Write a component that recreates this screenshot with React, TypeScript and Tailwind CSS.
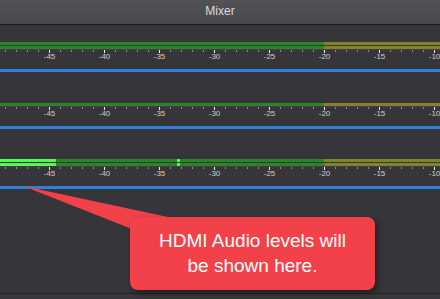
import React from 'react';

const W = 440;

// dB -> x on the meter: -45 sits at 49px, 11px per dB
const dbToX = (db: number) => 49 + (db + 45) * 11;

function Scale() {
  const minor: number[] = [];
  for (let db = -49; db <= -10; db++) minor.push(db);
  const majors = [-45, -40, -35, -30, -25, -20, -15, -10];
  return (
    <svg width={W} height={11} className="block">
      <line x1={0} x2={W} y1={0.5} y2={0.5} stroke="#4a3c40" />
      {minor.map((db) =>
        db % 5 === 0 ? null : (
          <rect key={db} x={dbToX(db)} y={1} width={1} height={2} fill="#8f8f8f" />
        )
      )}
      {majors.map((db) => (
        <g key={db}>
          <rect x={dbToX(db)} y={1} width={1} height={3} fill="#f4f4f4" />
          <text
            x={dbToX(db) + 0.5}
            y={10}
            textAnchor="middle"
            fontSize={8}
            fill="#cfcfcf"
            fontFamily="Liberation Sans, Arial, sans-serif"
          >
            {db}
          </text>
        </g>
      ))}
    </svg>
  );
}

function Channel({ level = 0, peak }: { level?: number; peak?: number }) {
  const split = dbToX(-20);
  return (
    <div className="relative flex h-[3px]">
      <div className="h-full bg-[#2c832c]" style={{ width: split }} />
      <div className="h-full flex-1 bg-[#82822e]" />
      {level > 0 && <div className="absolute left-0 top-0 h-full bg-[#58f458]" style={{ width: level }} />}
      {peak !== undefined && <div className="absolute top-0 h-full w-[3px] bg-[#58f458]" style={{ left: peak }} />}
    </div>
  );
}

function Meter({ stereo = true, level, peak }: { stereo?: boolean; level?: number; peak?: number }) {
  return (
    <div className="flex flex-col">
      {stereo ? (
        <div className="flex flex-col gap-px bg-[#1e4a20]">
          <Channel level={level} peak={peak} />
          <Channel level={level} peak={peak} />
        </div>
      ) : (
        <Channel />
      )}
      <Scale />
    </div>
  );
}

function BlueLine() {
  return <div className="h-[3px] w-full bg-[#2f80d8]" />;
}

export default function App() {
  return (
    <div
      className="relative flex h-[299px] w-[440px] flex-col overflow-hidden bg-[#363539]"
      style={{ fontFamily: 'Liberation Sans, Arial, sans-serif' }}
    >
      <div className="flex h-[25px] items-center justify-center border-b border-[#1d1d1f] bg-gradient-to-b from-[#535257] to-[#48474c] pb-[3px] text-[12px] text-[#dcdcdc]">
        Mixer
      </div>

      <div className="flex flex-1 flex-col">
        <div className="mt-[17px]">
          <Meter />
        </div>
        <div className="mt-[9px]">
          <BlueLine />
        </div>

        <div className="mt-[31px]">
          <Meter stereo={false} />
        </div>
        <div className="mt-[9px]">
          <BlueLine />
        </div>

        <div className="mt-[30px]">
          <Meter level={56} peak={177} />
        </div>
        <div className="mt-[9px]">
          <BlueLine />
        </div>

        <div className="mt-auto h-[6px] border-t border-[#242426] bg-[#38373b]" />
      </div>

      <svg width={W} height={299} className="pointer-events-none absolute left-0 top-0">
        <polygon points="23,186 168,217 132,229" fill="#f3414a" />
      </svg>
      <div className="absolute left-[130px] top-[217px] flex h-[73px] w-[245px] flex-col items-center justify-center rounded-[8px] bg-[#f3414a] pb-[2px] text-[19px] leading-[25px] text-white shadow-[2px_3px_6px_rgba(0,0,0,0.45)]">
        <span>HDMI Audio levels will</span>
        <span>be shown here.</span>
      </div>
    </div>
  );
}
